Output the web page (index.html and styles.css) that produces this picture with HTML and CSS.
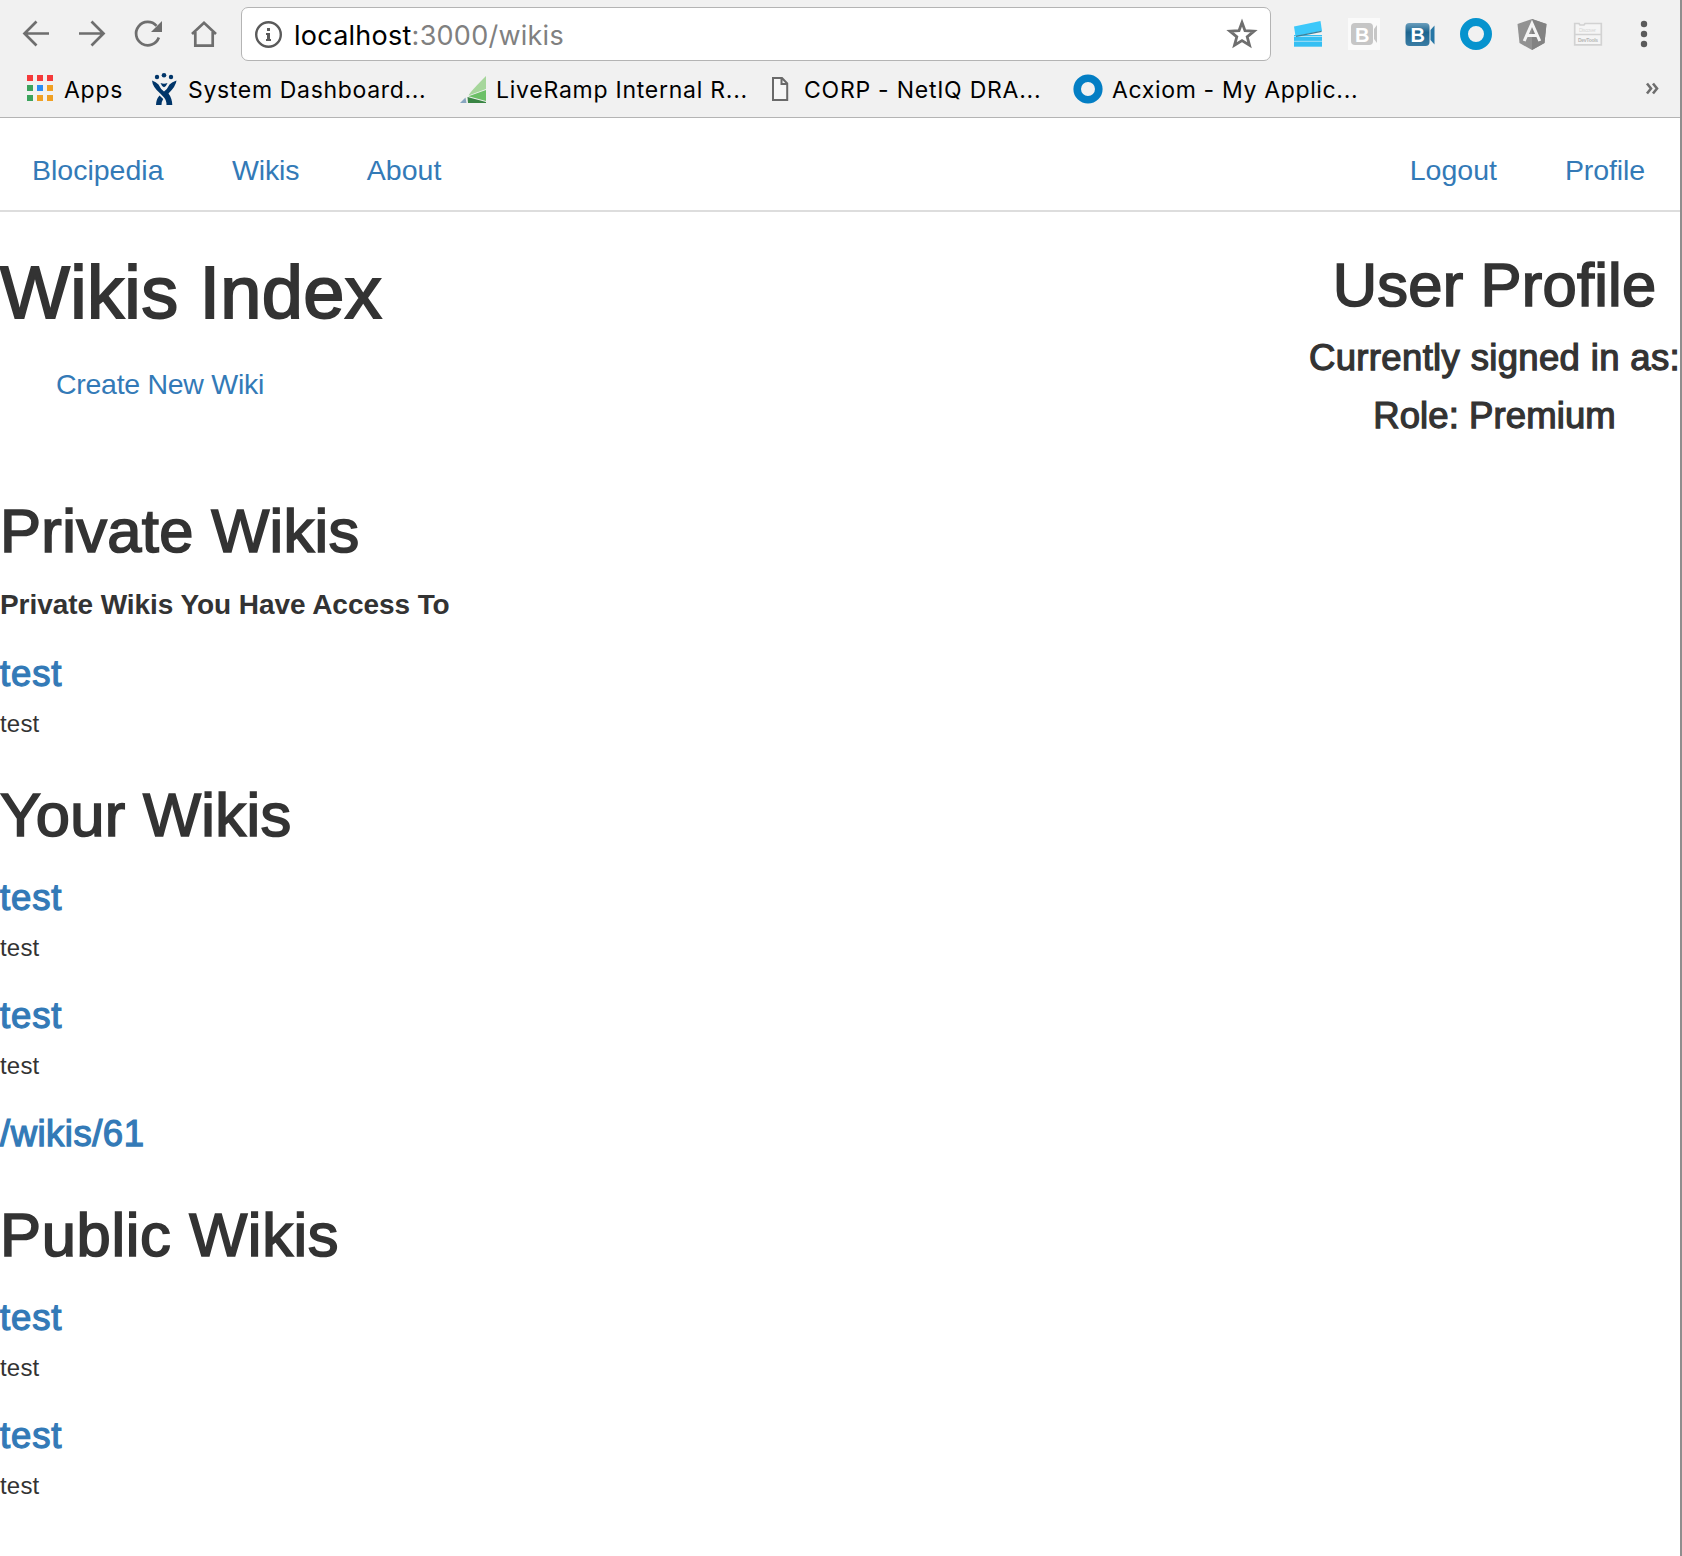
FILE: index.html
```html
<!DOCTYPE html>
<html lang="en">
<head>
<meta charset="utf-8">
<title>Blocipedia</title>
<link rel="stylesheet" href="styles.css">
</head>
<body>
<div class="window">
<header class="chrome">
  <div class="toolbar">
    <svg class="slot" viewBox="8 0 56 68"><path d="M49 33.500H25M36.500 21.500L24.500 33.500L36.500 45.500" class="line"/></svg>
    <svg class="slot" viewBox="64 0 56 68"><path d="M79 33.500H103M91.500 21.500L103.500 33.500L91.500 45.500" class="line"/></svg>
    <svg class="slot" viewBox="120 0 56 68"><path d="M158.800 37.500A11.700 11.700 0 1 1 156.500 25.800" class="line"/><path d="M162 21V32H151Z" fill="#6e6e6e"/></svg>
    <svg class="slot" viewBox="176 0 56 68"><path d="M192 34L204 22.800L216 34M195.300 32V45.600H212.700V32" class="line"/></svg>
    <div class="omnibox">
      <svg class="info" viewBox="250 7 36 54"><circle cx="268.500" cy="34.500" r="12.300" fill="none" stroke="#5a5a5a" stroke-width="2.400"/><path d="M267 28h3v3h-3zM266 33h4v6h1v2h-5v-2h1v-4h-1z" fill="#5a5a5a"/></svg>
      <span class="url"><span class="host">localhost</span>:3000/wikis</span>
      <svg class="star" viewBox="1222 7 40 54"><path d="M1242 22.500L1245 30.700L1254 31.200L1247.200 36.800L1249.500 45.200L1242 40.600L1234.500 45.200L1236.800 36.800L1230 31.200L1239 30.700Z" fill="none" stroke="#6e6e6e" stroke-width="2.800"/></svg>
    </div>
    <svg class="slot" viewBox="1280 0 56 68"><path d="M1294 35H1322V46.700H1294Z" fill="#35bff3"/><path d="M1294 36.500H1322M1294 41.300H1322" stroke="#a5e0f5" stroke-width="1"/><path d="M1294 26.500L1320.500 21L1322 31L1295.500 36.300Z" fill="#3cc8fa"/><path d="M1296 36.300L1321.500 31.400" stroke="#3d7f99" stroke-width="1.300"/></svg>
    <svg class="slot" viewBox="1336 0 56 68"><path d="M1348 18H1380V50H1348Z" fill="#fafafa"/><rect x="1351" y="23" width="22" height="22" rx="4" fill="#c6c6c6"/><path d="M1377 25V43L1374 39V29Z" fill="#c6c6c6"/><text x="1355" y="41.500" class="badge">B</text></svg>
    <svg class="slot" viewBox="1392 0 56 68"><defs><linearGradient id="bl" x2="0" y2="1"><stop stop-color="#6b9fbd"/><stop offset=".4" stop-color="#1d658f"/><stop offset="1" stop-color="#3a7ca4"/></linearGradient></defs><rect x="1405.500" y="23" width="24" height="23" rx="4" fill="url(#bl)"/><path d="M1434.500 25.500V44.500L1430.500 40V30Z" fill="#2676a5"/><text x="1410.500" y="42" class="badge">B</text></svg>
    <svg class="slot" viewBox="1448 0 56 68"><circle cx="1476" cy="34" r="12" fill="none" stroke="#0693ce" stroke-width="8"/></svg>
    <svg class="slot" viewBox="1504 0 56 68"><path d="M1532 19L1546.500 24L1544.500 43L1532 50L1519.500 43L1517.500 24Z" fill="#929292"/><path d="M1532 19L1546.500 24L1544.500 43L1532 50Z" fill="#828282"/><path d="M1524.200 41L1532 23.500L1539.800 41M1527.500 35.500H1536.500" fill="none" stroke="#f4f4f4" stroke-width="3"/></svg>
    <svg class="slot" viewBox="1560 0 56 68"><path d="M1574.700 23.500H1579L1580 25H1584L1585 23.500H1601.300V44.800H1574.700Z" fill="#f5f5f5" stroke="#d2d2d2" stroke-width="1.700"/><path d="M1575 34.500H1601" stroke="#d2d2d2" stroke-width="1.500"/><text x="1579" y="32" class="tiny" textLength="17" fill="#d5d5d5">Discover</text><text x="1578" y="41.500" class="tiny dev" textLength="20" fill="#b5b5b5">DevTools</text></svg>
    <svg class="slot" viewBox="1616 0 56 68"><g fill="#5a5a5a"><circle cx="1644" cy="24" r="3.200"/><circle cx="1644" cy="34" r="3.200"/><circle cx="1644" cy="44" r="3.200"/></g></svg>
  </div>
  <nav class="bookmarks">
    <a class="bm bm-apps"><svg width="37" height="49" viewBox="27 68 37 49"><path d="M27 75h6v6h-6zM37 75h6v6h-6zM47 75h6v6h-6z" fill="#f53a3a"/><path d="M27 85h6v6h-6zM27 95h6v6h-6z" fill="#3ba35c"/><path d="M37 85h6v6h-6z" fill="#2a8cf4"/><path d="M47 85h6v6h-6zM37 95h6v6h-6zM47 95h6v6h-6z" fill="#f0a023"/></svg><span>Apps</span></a>
    <a class="bm bm-system"><svg width="36" height="49" viewBox="152 68 36 49"><g fill="#003569"><circle cx="157" cy="77" r="2.200"/><circle cx="164" cy="75.300" r="2.300"/><circle cx="171" cy="77" r="2.200"/><path d="M160.500 83Q164 84.600 167.500 83Q166.500 86 164 87.300Q161.500 86 160.500 83Z"/><path d="M152 80.500Q156 82 158.500 84.500Q160.500 89 164 91.500Q167.500 89 169.500 84.500Q172 82 176.500 80.500Q176 86 168.500 93.500Q172 98 172.300 105H166.500Q166.500 100 164 97.500L160.500 93.800Q152.500 87 152 80.500Z"/><path d="M159.500 95.500L163.200 99Q161.500 101.500 161.500 105H156Q156 99.500 159.500 95.500Z"/></g></svg><span>System Dashboard...</span></a>
    <a class="bm bm-ramp"><svg width="36" height="49" viewBox="460 68 36 49"><path d="M486 76V89L468.500 95.500Q470 92 486 76Z" fill="#a6d69b"/><path d="M486 90V101L468.500 96.300Z" fill="#6cc067"/><path d="M467.500 97L486 102V103H468Z" fill="#3a8544"/><path d="M460 103L465.500 97.500L466.500 103Z" fill="#88a6c0"/></svg><span>LiveRamp Internal R...</span></a>
    <a class="bm bm-corp"><svg width="32" height="49" viewBox="772 68 32 49"><path d="M773 78H782L787.200 83.500V100H773ZM781.500 78V84H787" fill="#f7f7f7" stroke="#6a6a6a" stroke-width="2"/></svg><span>CORP - NetIQ DRA...</span></a>
    <a class="bm bm-acxiom"><svg width="39" height="49" viewBox="1073 68 39 49"><circle cx="1088" cy="89" r="10.800" fill="none" stroke="#037ec4" stroke-width="7.600"/></svg><span>Acxiom - My Applic...</span></a>
    <svg class="more" width="20" height="49" viewBox="1642 68 20 49"><path d="M1647 83.500L1651 88.500L1647 93.500M1653 83.500L1657 88.500L1653 93.500" fill="none" stroke="#6e6e6e" stroke-width="2.600"/></svg>
  </nav>
</header>
<nav class="site-nav">
  <a>Blocipedia</a><a class="wikis-link">Wikis</a><a class="about-link">About</a>
  <a class="logout-link">Logout</a><a class="profile-link">Profile</a>
</nav>
<div class="page">
  <main class="wikis">
    <h1>Wikis Index</h1>
    <p class="create"><a>Create New Wiki</a></p>
    <section class="private">
      <h2>Private Wikis</h2>
      <h5>Private Wikis You Have Access To</h5>
      <article><h4><a>test</a></h4><p>test</p></article>
    </section>
    <section class="yours">
      <h2>Your Wikis</h2>
      <article><h4><a>test</a></h4><p>test</p></article>
      <article><h4><a>test</a></h4><p>test</p></article>
      <article><h4 class="path"><a>/wikis/61</a></h4></article>
    </section>
    <section class="public">
      <h2>Public Wikis</h2>
      <article><h4><a>test</a></h4><p>test</p></article>
      <article><h4><a>test</a></h4><p>test</p></article>
    </section>
  </main>
  <aside class="profile">
    <h2>User Profile</h2>
    <h4 class="signed-in">Currently signed in as:</h4>
    <h4 class="role">Role: Premium</h4>
  </aside>
</div>
</div>
</body>
</html>
```
FILE: styles.css
```css
* { box-sizing: border-box; }
body {
  margin: 0;
  background: #fff;
  color: #333;
  font-family: "Liberation Sans", Arial, sans-serif;
  font-size: 24px;
  line-height: 33px;
}
h1, h2, h4, h5, p { margin: 0; }
svg { display: block; flex: none; }
a { color: inherit; }
.window {
  height: 1556px;
  border-right: 2px solid #8e8e8e;
  overflow: hidden;
}

/* Browser chrome */
.chrome {
  height: 118px;
  background: #f1f1f1;
  border-bottom: 1px solid #b4b4b4;
  font-family: Inter, Roboto, sans-serif;
  color: #000;
}
.toolbar {
  display: flex;
  align-items: center;
  height: 68px;
  padding-left: 8px;
}
.slot { width: 56px; height: 68px; }
.line { fill: none; stroke: #6e6e6e; stroke-width: 2.700px; }
.badge { font: bold 20px "Liberation Sans", sans-serif; fill: #fff; }
.tiny { font: 5px "Liberation Sans", sans-serif; }
.dev { font-weight: bold; }
.omnibox {
  display: flex;
  align-items: center;
  width: 1030px;
  height: 54px;
  margin: 0 9px;
  padding: 0 8px;
  border: 1px solid #b4b4b4;
  border-radius: 7px;
  background: #fff;
}
.info { width: 36px; height: 54px; }
.star { width: 40px; height: 54px; margin-left: auto; }
.url { margin-left: 8px; padding-top: 2px; font-size: 27px; letter-spacing: 0.250px; color: #808080; }
.host { color: #000; }
.bookmarks { display: flex; padding-left: 27px; height: 49px; }
.bm { display: flex; flex: none; font-size: 23px; line-height: 44px; letter-spacing: 0.750px; white-space: nowrap; }
.bm-apps { width: 125px; }
.bm-system { width: 308px; letter-spacing: 0.670px; }
.bm-ramp { width: 312px; }
.bm-corp { width: 301px; }
.bm-acxiom { letter-spacing: 0.650px; }
.more { margin: 0 18px 0 auto; }

/* Site navigation */
.site-nav {
  display: flex;
  height: 94px;
  padding: 32px 35px 0 32px;
  border-bottom: 2px solid #ddd;
  font-size: 28.500px;
  line-height: 40px;
  color: #337ab7;
}
.wikis-link { margin-left: 68.500px; letter-spacing: -0.150px; }
.about-link { margin-left: 67.500px; }
.logout-link { margin-left: auto; }
.profile-link { margin-left: 68px; letter-spacing: -0.100px; }

/* Page */
.page { display: flex; justify-content: space-between; }
.wikis { padding-top: 40px; }
h1, h2, h4 { font-weight: 400; }
h1 { font-size: 74px; line-height: 81px; letter-spacing: 0.350px; -webkit-text-stroke: 1.900px; }
h2 { font-size: 61.500px; line-height: 67px; letter-spacing: 0.330px; -webkit-text-stroke: 1.700px; }
h4 { font-size: 36.500px; line-height: 41px; letter-spacing: 0.850px; -webkit-text-stroke: 1.250px; }
h5 { margin-top: 25px; font-size: 28px; line-height: 31px; letter-spacing: -0.060px; }
.create { margin-top: 31px; padding-left: 56px; font-size: 28.500px; line-height: 40px; letter-spacing: -0.280px; color: #337ab7; }
.private { margin-top: 93px; }
.yours { margin-top: 41px; }
.public { margin-top: 47px; }
.public h2 { letter-spacing: 0.650px; }
article { margin-top: 31px; }
h2 + article { margin-top: 29px; }
h5 + article { margin-top: 33px; }
article h4 { color: #337ab7; }
article p { margin-top: 13px; letter-spacing: 0.200px; }
.path { letter-spacing: 0.500px; }
.profile { padding-top: 39px; text-align: center; }
.profile h2 { letter-spacing: 0.200px; }
.signed-in { margin-top: 19px; letter-spacing: 0.340px; }
.role { margin-top: 17px; letter-spacing: 0.100px; }
```
